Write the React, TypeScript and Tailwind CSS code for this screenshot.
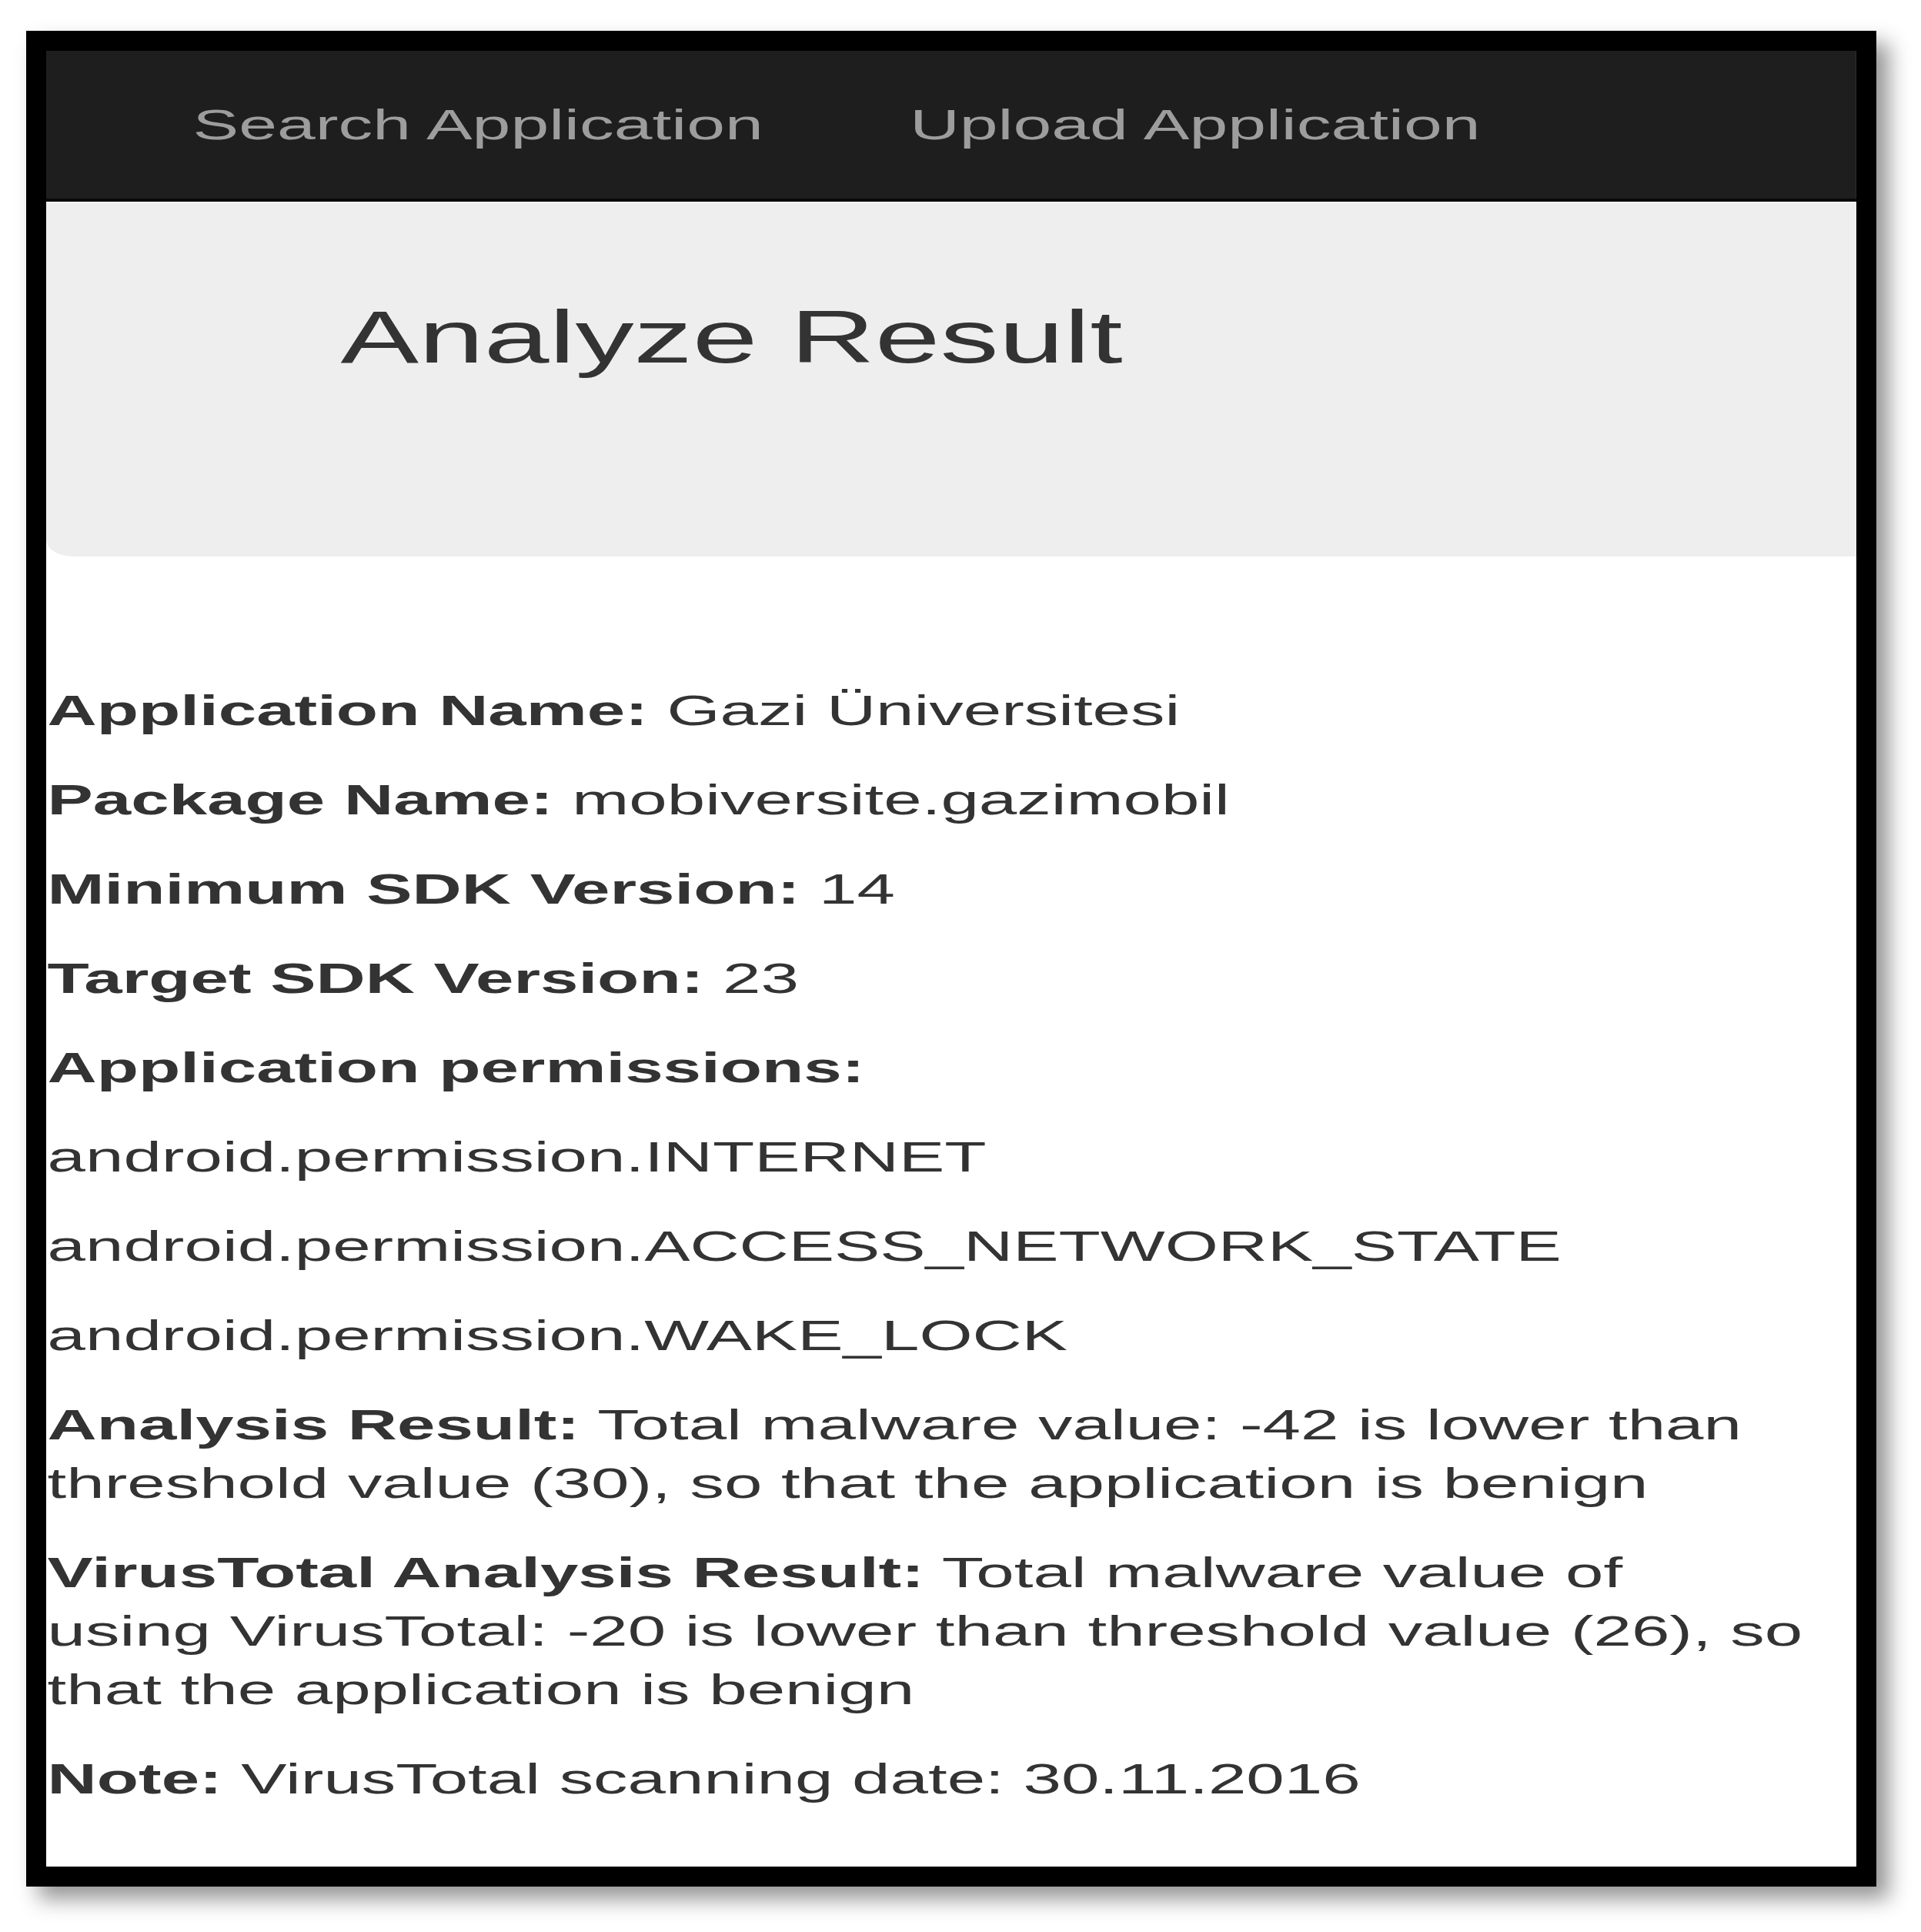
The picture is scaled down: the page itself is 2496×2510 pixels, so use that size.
import React from "react";

function Row({ label, value }: { label?: string; value?: string }) {
  return (
    <p className="mb-[40px]">
      {label ? <span className="font-bold">{label}</span> : null}
      {label && value ? " " : null}
      {value}
    </p>
  );
}

export default function App() {
  return (
    <div className="w-[2496px] min-h-[2510px] bg-white pt-[40px] pl-[34px] font-['Liberation_Sans',Arial,sans-serif]">
      <div className="w-[2404px] h-[2411px] border-[26px] border-black bg-black shadow-[16px_16px_26px_rgba(0,0,0,0.42)]">
        <div className="w-[2352px] h-[2359px] overflow-hidden bg-white">
          <div className="w-[1482px] h-[2359px] origin-top-left scale-x-[1.587]">
            <nav className="h-[196px] bg-[#1e1e1e] border-b-[4px] border-[#080808] flex items-center text-[56.4px] leading-[64px] text-[#9d9d9d]">
              <span className="ml-[120px]">Search Application</span>
              <span className="ml-[120px]">Upload Application</span>
            </nav>
            <div className="h-[461px] bg-[#eeeeee] border-t-[2px] border-[#f7f7f7] rounded-bl-[22px] pl-[241px] pt-[121px]">
              <h1 className="text-[96px] leading-[105px] font-normal text-[#333333]">
                Analyze Result
              </h1>
            </div>
            <div className="mt-[162px] pl-px text-[56px] leading-[76px] text-[#333333]">
              <Row label="Application Name:" value="Gazi Üniversitesi" />
              <Row label="Package Name:" value="mobiversite.gazimobil" />
              <Row label="Minimum SDK Version:" value="14" />
              <Row label="Target SDK Version:" value="23" />
              <Row label="Application permissions:" />
              <Row value="android.permission.INTERNET" />
              <Row value="android.permission.ACCESS_NETWORK_STATE" />
              <Row value="android.permission.WAKE_LOCK" />
              <p className="mb-[40px]">
                <span className="font-bold">Analysis Result:</span> Total malware value: -42 is lower than
                <br />
                threshold value (30), so that the application is benign
              </p>
              <p className="mb-[40px]">
                <span className="font-bold">VirusTotal Analysis Result:</span> Total malware value of
                <br />
                using VirusTotal: -20 is lower than threshold value (26), so
                <br />
                that the application is benign
              </p>
              <p className="mb-[40px]">
                <span className="font-bold">Note:</span> VirusTotal scanning date: 30.11.2016
              </p>
            </div>
          </div>
        </div>
      </div>
    </div>
  );
}
